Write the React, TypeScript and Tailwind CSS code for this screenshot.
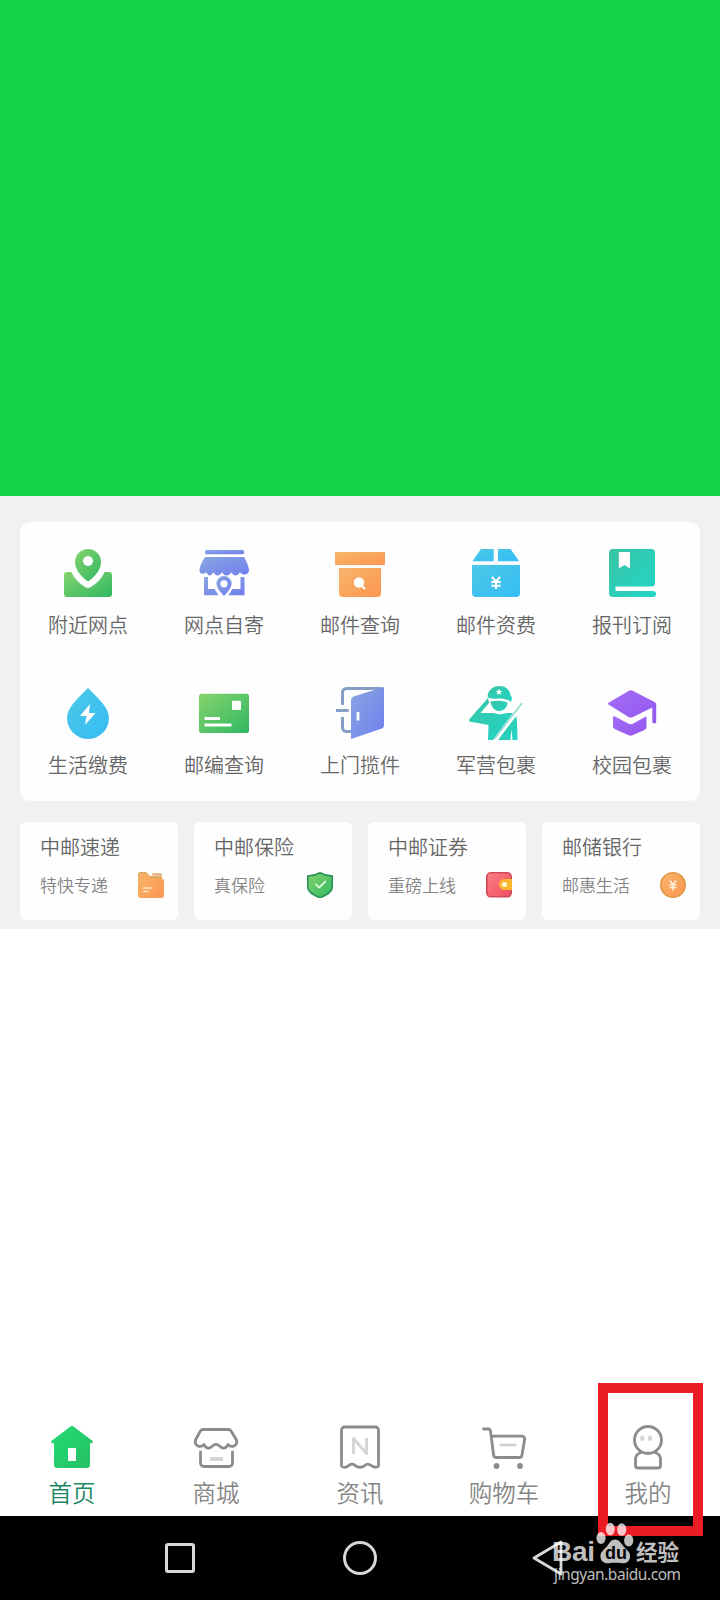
import type { ReactNode } from "react";

const Gradients = () => (
  <svg className="absolute h-0 w-0" aria-hidden="true">
    <defs>
      <linearGradient id="green" x1="0" y1="0" x2="1" y2="1">
        <stop offset="0" stopColor="#86d36c" />
        <stop offset="1" stopColor="#2fb863" />
      </linearGradient>
      <linearGradient id="home" x1="0" y1="0" x2="1" y2="1">
        <stop offset="0" stopColor="#22dc76" />
        <stop offset="1" stopColor="#26bf63" />
      </linearGradient>
      <linearGradient id="blue" x1="0" y1="0" x2="1" y2="1">
        <stop offset="0" stopColor="#8aa6e2" />
        <stop offset="1" stopColor="#6f7fee" />
      </linearGradient>
      <linearGradient id="orange" x1="0" y1="0" x2="1" y2="1">
        <stop offset="0" stopColor="#f8b56c" />
        <stop offset="1" stopColor="#fb9650" />
      </linearGradient>
      <linearGradient id="cyan" x1="0" y1="0" x2="1" y2="1">
        <stop offset="0" stopColor="#4cc8e6" />
        <stop offset="1" stopColor="#36bdf6" />
      </linearGradient>
      <linearGradient id="teal" x1="0" y1="0" x2="1" y2="1">
        <stop offset="0" stopColor="#38c4a4" />
        <stop offset="1" stopColor="#22d6c8" />
      </linearGradient>
      <linearGradient id="purple" x1="0" y1="0" x2="1" y2="1">
        <stop offset="0" stopColor="#a56cf6" />
        <stop offset="1" stopColor="#9257ee" />
      </linearGradient>
      <linearGradient id="red" x1="0" y1="0" x2="1" y2="1">
        <stop offset="0" stopColor="#fb7f85" />
        <stop offset="1" stopColor="#ee4f62" />
      </linearGradient>
    </defs>
  </svg>
);

const ServiceIcon = ({ children }: { children: ReactNode }) => (
  <svg viewBox="0 0 56 56" className="h-14 w-14" fill="none">
    {children}
  </svg>
);

const SmallIcon = ({ children }: { children: ReactNode }) => (
  <svg viewBox="0 0 26 26" className="h-[26px] w-[26px]" fill="none">
    {children}
  </svg>
);

const TabIcon = ({ children }: { children: ReactNode }) => (
  <svg
    viewBox="0 0 48 48"
    className="h-12 w-12"
    fill="none"
    stroke="#8c8c8c"
    strokeWidth="2.800"
    strokeLinecap="round"
    strokeLinejoin="round"
  >
    {children}
  </svg>
);

const services = [
  {
    label: "附近网点",
    icon: (
      <>
        <path
          d="M7 28h4.500c2 5.500 7.500 11.500 14 15.300a5 5 0 0 0 5 0C37 39.500 42.500 33.500 44.500 28H49a3 3 0 0 1 3 3v19a3 3 0 0 1-3 3H7a3 3 0 0 1-3-3V31a3 3 0 0 1 3-3Z"
          fill="url(#green)"
        />
        <path
          d="M28 5a13 13 0 0 1 13 13c0 8-6.500 14.500-11.500 18.600a2.400 2.400 0 0 1-3 0C21.500 32.500 15 26 15 18A13 13 0 0 1 28 5Z"
          fill="url(#green)"
        />
        <circle cx="28" cy="17" r="5" fill="#fff" />
      </>
    ),
  },
  {
    label: "网点自寄",
    icon: (
      <>
        <rect x="9" y="6" width="39" height="4.200" rx="1.500" fill="url(#blue)" />
        <path
          d="M10 13h37a2 2 0 0 1 1.700 1c2 4 4 8 4.300 12 0 5-6.500 6.500-9 2-2 4.500-7 4.500-8.500 0-2 4.500-8 4.500-9.500 0-2 4.500-7 4.500-8.500 0-2 4.500-6 4.500-7 0-4 3.500-7.500 1.500-7-2 .5-5 2.500-8 4.800-12a2 2 0 0 1 1.700-1Z"
          fill="url(#blue)"
        />
        <path
          d="M8 33h4v12h6.500l4 6.200H8ZM44.500 33h4v18.200H32.500l4-6.200h8Z"
          fill="url(#blue)"
        />
        <path
          fillRule="evenodd"
          d="M28 32a7.500 7.500 0 0 1 7.500 7.500c0 4.500-4 8.500-7.500 12.500-3.500-4-7.500-8-7.500-12.500A7.500 7.500 0 0 1 28 32Zm0 4.200a3.600 3.600 0 1 0 0 7.200 3.600 3.600 0 0 0 0-7.200Z"
          fill="url(#blue)"
        />
      </>
    ),
  },
  {
    label: "邮件查询",
    icon: (
      <>
        <rect x="3" y="8" width="50" height="13" rx="0.800" fill="url(#orange)" />
        <path d="M7 24h42v25a4 4 0 0 1-4 4H11a4 4 0 0 1-4-4Z" fill="url(#orange)" />
        <circle cx="27" cy="38.500" r="5.200" fill="#fff" />
        <path d="m29 41 4 4" stroke="#fff" strokeWidth="2" />
      </>
    ),
  },
  {
    label: "邮件资费",
    icon: (
      <>
        <path
          d="M14 5h11.700v12.300H4.500L12 6.200A2.500 2.500 0 0 1 14 5ZM30 5h11.500a2.500 2.500 0 0 1 2 1.200l7.700 11.100H30Z"
          fill="url(#cyan)"
        />
        <path d="M4 21h48v28a4 4 0 0 1-4 4H8a4 4 0 0 1-4-4Z" fill="url(#cyan)" />
        <path
          d="m24 33 4 4.500 4-4.500M28 37v8M23.300 38h9.400M23.300 41.700h9.400"
          stroke="#fff"
          strokeWidth="2.100"
        />
      </>
    ),
  },
  {
    label: "报刊订阅",
    icon: (
      <>
        <path
          d="M9 5h38.500A3.500 3.500 0 0 1 51 8.500V39a3.500 3.500 0 0 1-3.500 3.500h-36V47H49a3 3 0 0 1 0 6H9a4 4 0 0 1-4-4V9a4 4 0 0 1 4-4Z"
          fill="url(#teal)"
        />
        <path d="M14.800 8H26v16.500L20.400 21l-5.600 3.500Z" fill="#fff" />
      </>
    ),
  },
  {
    label: "生活缴费",
    icon: (
      <>
        <path
          d="M28 4c8 8.500 21 18.500 21 30a21 21 0 0 1-42 0C7 22.500 20 12.500 28 4Z"
          fill="url(#cyan)"
        />
        <path d="m30 20-10 12h6.500L25 41l10.500-12H29Z" fill="#fff" />
      </>
    ),
  },
  {
    label: "邮编查询",
    icon: (
      <>
        <rect x="3" y="9.700" width="50" height="39.300" rx="2.500" fill="url(#green)" />
        <rect x="36" y="16.700" width="9" height="9.300" rx="0.800" fill="#fff" />
        <path d="M8.500 34.500H24M8.500 41H35.500" stroke="#fff" strokeWidth="2.800" />
      </>
    ),
  },
  {
    label: "上门揽件",
    icon: (
      <>
        <path
          d="M10.500 21V8.500a4 4 0 0 1 4-4H50M10.500 33v10.500a4 4 0 0 0 4 4H20M4 26.500h12.700"
          stroke="#859ec8"
          strokeWidth="3"
        />
        <path
          d="M21.500 12.500 52 3v38a4 4 0 0 1-2.800 3.800L19 55V16a3.700 3.700 0 0 1 2.500-3.500Z"
          fill="url(#blue)"
        />
        <path d="M26 28v8.500" stroke="#fff" strokeWidth="2.800" />
      </>
    ),
  },
  {
    label: "军营包裹",
    icon: (
      <>
        {/* saluting arm and torso */}
        <path
          d="M20 14 1.500 35c-.8 1.200-.3 2.500 1 2.800l18 3.200L20 56h5L45 29h-6l-7 1.500-7-1.500H12.500L21 19Z"
          fill="url(#teal)"
        />
        <path
          d="M47.500 30c1.500 3 2 15 2 26h-5l-1-11-1 11H30Z"
          fill="url(#teal)"
        />
        {/* face */}
        <path d="M22.500 17.500c6-1.500 12-1 17 1-.3 5-4 8.500-8.500 8.500s-8-4.500-8.500-9.500Z" fill="url(#teal)" />
        {/* cap */}
        <path
          d="M19.500 13C20 6 25 2 31 2c7 0 11 4 11.500 9.500l1.500 2-1 4.500c-3-3-8-4-13-3.500-4 .3-8 .5-10.500-1.500Z"
          fill="url(#teal)"
        />
        <path d="m31 4.700 1 2 2.200.2-1.600 1.600.4 2.200-2-1-2 1 .4-2.200-1.600-1.600 2.200-.2Z" fill="#fff" />
        {/* rifle strap */}
        <path d="M54 19 27 55" stroke="#8fd8cb" strokeWidth="1.600" />
        <path d="M49 29 28.500 55.500" stroke="#fff" strokeWidth="2.600" />
      </>
    ),
  },
  {
    label: "校园包裹",
    icon: (
      <>
        <path
          d="M25.500 6.600a3 3 0 0 1 2.800 0L50.500 18a3 3 0 0 1 1.700 2.700V37.500a1.900 1.900 0 0 1-3.900 0V23.500L29 33a5 5 0 0 1-4.500 0L4.500 20.500a1 1 0 0 1 0-1.700Z"
          fill="url(#purple)"
        />
        <path
          d="m10.500 32.200 13.700 7.300a5.500 5.500 0 0 0 5 0l13.300-7.300V43a3 3 0 0 1-1.600 2.700l-12.400 5.500a4.500 4.500 0 0 1-3.800 0L10.600 45A3 3 0 0 1 9 42.300v-9.200a1 1 0 0 1 1.500-.9Z"
          fill="url(#purple)"
        />
      </>
    ),
  },
];

const partners = [
  {
    title: "中邮速递",
    subtitle: "特快专递",
    pad: "pr-3.5",
    icon: (
      <>
        <path d="M3 0h5l4 4h12v5H0V3a3 3 0 0 1 3-3Z" fill="#d9a85c" />
        <path d="M14 1h8.500A1.500 1.500 0 0 1 24 2.500V5H15Z" fill="#e8b98a" />
        <path
          d="M2 2c5-2 8 0 10 3 .8 1.200 1.600 1.500 3 1.500h8a3 3 0 0 1 3 3V23a3 3 0 0 1-3 3H3a3 3 0 0 1-3-3V7c0-2 .5-4 2-5Z"
          fill="url(#orange)"
        />
        <path d="M5 16h8.500M5 19.500h5.500" stroke="#ffe6c8" strokeWidth="1.600" />
      </>
    ),
  },
  {
    title: "中邮保险",
    subtitle: "真保险",
    pad: "pr-[19px]",
    icon: (
      <>
        <path
          d="M13 .8c3.500 2 7.500 3 12.200 3.200V15c0 5.500-6.700 8.500-12.200 10.800C7.500 23.500.8 20.500.8 15V4C5.500 3.800 9.500 2.800 13 .8Z"
          fill="url(#green)"
          stroke="#29915a"
          strokeWidth="1.600"
        />
        <path d="m8.500 12 3.700 3.500 6.500-6.300" stroke="#e8ffe9" strokeWidth="1.700" />
      </>
    ),
  },
  {
    title: "中邮证券",
    subtitle: "重磅上线",
    pad: "pr-3.5",
    icon: (
      <>
        <rect
          x="0.800"
          y="0.800"
          width="24.400"
          height="24"
          rx="4"
          fill="url(#red)"
          stroke="#cf4a58"
          strokeWidth="1.600"
        />
        <path d="M18.500 7H26v11h-7.500a5.500 5.500 0 0 1 0-11Z" fill="#fbb62e" />
        <circle cx="18.500" cy="12.500" r="2.600" fill="#fff6d8" />
      </>
    ),
  },
  {
    title: "邮储银行",
    subtitle: "邮惠生活",
    pad: "pr-3.5",
    icon: (
      <>
        <circle cx="13" cy="13" r="12.200" fill="url(#orange)" stroke="#e09848" strokeWidth="1.600" />
        <path
          d="m9.800 8.500 3.200 4 3.200-4M13 12v6.500M9.500 13h7M9.500 15.500h7"
          stroke="#fff0d8"
          strokeWidth="1.500"
        />
      </>
    ),
  },
];

const tabs = [
  {
    label: "首页",
    color: "text-[#1c8563]",
    icon: (
      <g stroke="none">
        <path
          d="M22.500 4.500a2.500 2.500 0 0 1 3 0L44 18.500c1.500 1.300.8 2.700-.5 2.700H42v21.300a3.500 3.500 0 0 1-3.500 3.500h-29A3.500 3.500 0 0 1 6 42.500V21.200H4.500c-1.300 0-2-1.400-.5-2.700Z"
          fill="url(#home)"
        />
        <rect x="20" y="26" width="8" height="13" rx="0.800" fill="#fff" />
      </g>
    ),
  },
  {
    label: "商城",
    color: "text-[#858585]",
    icon: (
      <>
        <path d="M11 7.500h25.500a3 3 0 0 1 2.700 1.700L44.500 18c1.500 4.500-3.500 9-8.500 4.500-1.500 3.500-4 4-6 3.200-1.500-.5-2.500-2-3.500-2.500-1.500-1-3.500-1-5 0-1 .5-2 2-3.500 2.500-2 .8-4.500.3-6-3.200C7 27 2 22.500 3.500 18l4.800-8.800A3 3 0 0 1 11 7.500Z" />
        <path d="M8.500 30v11a3.500 3.500 0 0 0 3.500 3.500h25a3.500 3.500 0 0 0 3.500-3.500V30" />
        <path d="M18 37h13" stroke="#d6d6d6" strokeWidth="4" strokeLinecap="butt" />
      </>
    ),
  },
  {
    label: "资讯",
    color: "text-[#858585]",
    icon: (
      <>
        <path d="M8.500 5h31a3 3 0 0 1 3 3v36c-2 2.500-5 1-7.500-.7-2.500-1.800-4-1.800-6 0-3.500 2.800-6.500 2.800-10 0-2-1.500-4-1.500-6 0-2.500 2-5.500 3.200-7.500.7V8a3 3 0 0 1 3-3Z" />
        <path d="M17.500 32V16.500L30.500 31.500V16" stroke="#d6d6d6" strokeLinecap="butt" strokeWidth="3" />
      </>
    ),
  },
  {
    label: "购物车",
    color: "text-[#858585]",
    icon: (
      <>
        <path d="M3.500 7H8a2.500 2.500 0 0 1 2.500 2.200L13.600 33a2.800 2.800 0 0 0 2.800 2.500h22.800A2.800 2.800 0 0 0 42 33l2.600-15.500a2.800 2.800 0 0 0-2.800-3.300H11.500" />
        <path d="M20.500 23h15" stroke="#cfcfcf" strokeWidth="2.400" />
        <circle cx="16.500" cy="44" r="2.900" fill="#8c8c8c" stroke="none" />
        <circle cx="40" cy="44" r="2.900" fill="#8c8c8c" stroke="none" />
      </>
    ),
  },
  {
    label: "我的",
    color: "text-[#858585]",
    icon: (
      <>
        <circle cx="24" cy="18" r="13.500" />
        <path d="M16 31c-3 1-4.500 3.500-4.500 6.500v6a2.500 2.500 0 0 0 2.500 2.500h20a2.500 2.500 0 0 0 2.500-2.500v-6c0-3-1.500-5.500-4.500-6.500" />
        <path d="M18.300 15.500v1.500M26 15.500v1.500" stroke="#d4d4d4" strokeWidth="3.800" />
      </>
    ),
  },
];

const Watermark = () => (
  <div className="absolute left-[552px] top-[1522px] h-[68px] w-[132px] font-normal text-white/75">
    <span className="absolute left-0 top-[15px] text-[28px] font-bold leading-[30px] tracking-[-0.3px] font-['Liberation_Sans',sans-serif]">
      Bai
    </span>
    <svg viewBox="0 0 38 42" className="absolute left-[44px] top-0 h-[42px] w-[38px]" fill="currentColor">
      <ellipse cx="5" cy="16" rx="4.600" ry="6" />
      <ellipse cx="14.300" cy="7" rx="4.500" ry="6.300" />
      <ellipse cx="25.700" cy="7.500" rx="4.600" ry="6.300" />
      <ellipse cx="32.700" cy="18.500" rx="4.600" ry="6" />
      <path d="M19 17.500c4.500 0 6.500 4.500 9.500 8 3 3 6 5 5.500 9.500-.5 5-4 6.500-8 6.200-4-.6-9-.6-13 0-4 .3-8-1.200-8.500-6.200-.5-4.500 2.500-6.500 5.500-9.500 3-3.500 4.500-8 9-8Z" />
    </svg>
    <span className="absolute left-[53px] top-[19px] text-[18px] font-bold leading-[24px] text-black font-['Liberation_Sans',sans-serif]">
      du
    </span>
    <span className="absolute left-[84px] top-[16px] text-[21.500px] font-bold leading-[26px]">经验</span>
    <span className="absolute left-0.5 top-[41px] text-[15.500px] leading-[22px] tracking-[-0.45px] font-['Noto_Sans',sans-serif]">
      jingyan.baidu.com
    </span>
  </div>
);

const App = () => {
  return (
    <div className="relative flex h-[1600px] w-[720px] flex-col overflow-hidden bg-white font-[350] font-['Noto_Sans_CJK_SC',sans-serif]">
      <Gradients />
      <header className="h-[496px] shrink-0 bg-[#11d345]" />

      <main className="h-[433px] shrink-0 bg-[#f1f1f1] px-5 pt-[26px]">
        <section className="grid h-[279px] grid-cols-5 content-start gap-y-11 rounded-[10px] bg-[#fefefe] pt-[22px]">
          {services.map((service) => (
            <div key={service.label} className="flex flex-col items-center gap-2.5">
              <ServiceIcon>{service.icon}</ServiceIcon>
              <span className="text-[20px] leading-[30px] text-[#666666]">{service.label}</span>
            </div>
          ))}
        </section>

        <section className="mt-[21px] grid grid-cols-4 gap-4">
          {partners.map((partner) => (
            <div key={partner.title} className="h-[98px] rounded-md bg-[#fefefe] pl-5 pt-2.5">
              <h3 className="text-[20px] leading-[30px] text-[#666666]">{partner.title}</h3>
              <div className={`mt-2.5 flex items-center justify-between ${partner.pad}`}>
                <span className="text-[17px] leading-[26px] text-[#848484]">{partner.subtitle}</span>
                <SmallIcon>{partner.icon}</SmallIcon>
              </div>
            </div>
          ))}
        </section>
      </main>

      <nav className="mt-auto grid shrink-0 grid-cols-5 pb-2">
        {tabs.map((tab) => (
          <div key={tab.label} className="flex flex-col items-center gap-1.5">
            <TabIcon>{tab.icon}</TabIcon>
            <span className={`text-[23.500px] leading-8 ${tab.color}`}>{tab.label}</span>
          </div>
        ))}
      </nav>

      {/* Android system navigation */}
      <footer className="grid h-[84px] shrink-0 grid-cols-[1fr_180px_180px_1fr] items-center bg-black">
        <div className="flex justify-end">
          <div className="h-[30px] w-[30px] translate-x-[15px] rounded-[3px] border-3 border-[#d8d8d8]" />
        </div>
        <div className="flex justify-end">
          <div className="h-[34px] w-[34px] translate-x-[17px] rounded-full border-3 border-[#d8d8d8]" />
        </div>
        <div className="flex justify-end">
          <svg
            viewBox="0 0 36 40"
            className="h-10 w-9 translate-x-[25px]"
            fill="none"
            stroke="#d8d8d8"
            strokeWidth="2.800"
            strokeLinejoin="round"
          >
            <path d="M5 20 32 4v32Z" />
          </svg>
        </div>
      </footer>

      {/* Highlight around the profile tab */}
      <div className="absolute left-[598px] top-[1383px] h-[153px] w-[105px] border-[10px] border-[#ec1c24]" />
      <Watermark />
    </div>
  );
};

export default App;
